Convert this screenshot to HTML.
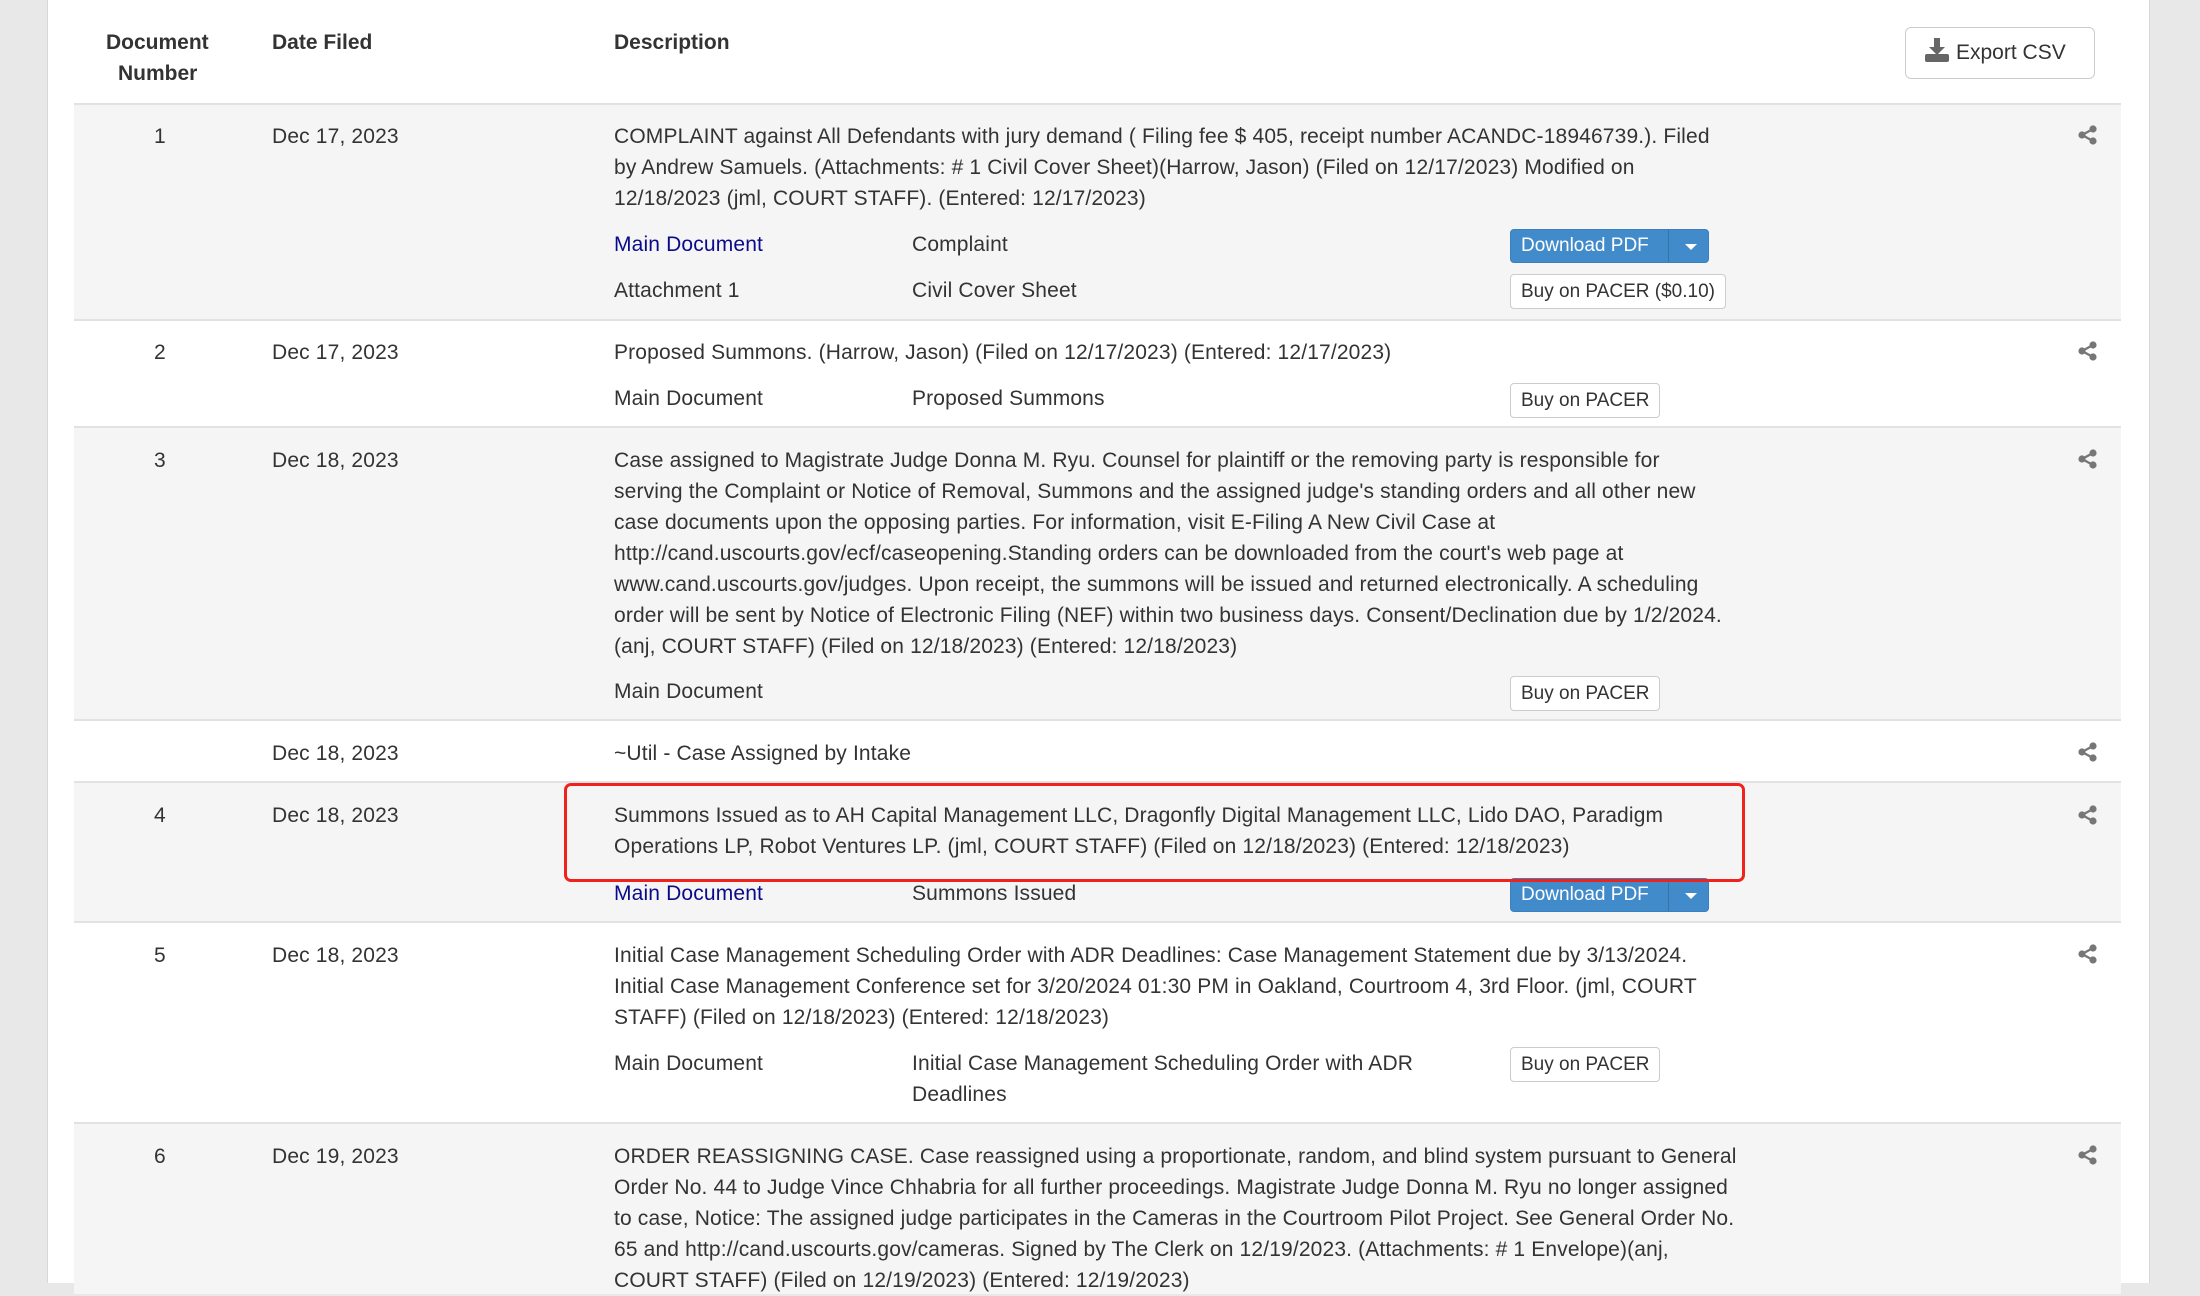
<!DOCTYPE html>
<html><head><meta charset="utf-8"><style>
*{margin:0;padding:0;box-sizing:border-box}
body{width:2200px;height:1283px;overflow:hidden;background:#e8e8e8;font-family:"Liberation Sans",Arial,sans-serif;color:#333;font-size:21px;position:relative;letter-spacing:0.15px}
.page{position:absolute;left:47px;top:0;width:2103px;height:1283px;background:#fff;border-left:1px solid #d8d8d8;border-right:1px solid #d8d8d8}
.row{position:absolute;left:74px;width:2047px;border-bottom:2px solid #e2e2e2}
.g{background:#f5f5f5}
.t{position:absolute;white-space:nowrap;line-height:31px}
.b{font-weight:bold;letter-spacing:0}
a{color:#0a0a8a;text-decoration:none}
.btn{position:absolute;border:1px solid #ccc;border-radius:4px;background:#fff;font-size:19px;line-height:33px;height:35px;padding:0 10px;white-space:nowrap;letter-spacing:0}
.dl{position:absolute;background:#428bca;border:1px solid #3a7fc0;border-radius:4px;color:#fff;font-size:19px;height:34px;width:199px;line-height:32px;padding-left:10px;letter-spacing:0}
.dl span{position:absolute;left:157px;top:0;width:1px;height:32px;background:#3572a8}
.dl i{position:absolute;left:174px;top:14px;border-left:6px solid transparent;border-right:6px solid transparent;border-top:6px solid #fff}
.sh{position:absolute;left:2078px}
</style></head><body>
<div class="page"></div>
<svg width="0" height="0" style="position:absolute"><defs><g id="share"><circle cx="15" cy="4" r="3.6" fill="#777"/><circle cx="4" cy="10" r="3.6" fill="#777"/><circle cx="15" cy="16" r="3.6" fill="#777"/><path d="M4 10L15 4M4 10L15 16" stroke="#777" stroke-width="2.4"/></g></defs></svg>

<div class="t b" style="left:106px;top:27px">Document</div>
<div class="t b" style="left:118px;top:58px">Number</div>
<div class="t b" style="left:272px;top:27px">Date Filed</div>
<div class="t b" style="left:614px;top:27px">Description</div>
<div class="btn" style="left:1905px;top:27px;height:52px;width:190px;line-height:50px;font-size:21px;border-radius:6px;padding-left:18px"><svg width="26" height="26" viewBox="0 0 26 26" style="vertical-align:-4px;margin-right:6px"><path d="M10 1h6v9h5l-8 8-8-8h5z" fill="#666"/><rect x="1" y="17" width="24" height="8" rx="2" fill="#666"/></svg>Export CSV</div>
<div style="position:absolute;left:74px;top:103px;width:2047px;height:2px;background:#e2e2e2"></div>

<div class="row g" style="top:105px;height:216px"></div>
<div class="t" style="left:154px;top:121px">1</div>
<div class="t" style="left:272px;top:121px">Dec 17, 2023</div>
<div class="t" style="left:614px;top:121px">COMPLAINT against All Defendants with jury demand ( Filing fee $ 405, receipt number ACANDC-18946739.). Filed<br>by Andrew Samuels. (Attachments: # 1 Civil Cover Sheet)(Harrow, Jason) (Filed on 12/17/2023) Modified on<br>12/18/2023 (jml, COURT STAFF). (Entered: 12/17/2023)</div>
<div class="t" style="left:614px;top:229px"><a>Main Document</a></div>
<div class="t" style="left:912px;top:229px">Complaint</div>
<div class="dl" style="left:1510px;top:229px">Download PDF<span></span><i></i></div>
<div class="t" style="left:614px;top:275px">Attachment 1</div>
<div class="t" style="left:912px;top:275px">Civil Cover Sheet</div>
<div class="btn" style="left:1510px;top:274px">Buy on PACER ($0.10)</div>
<svg class="sh" style="top:125px" width="20" height="20"><use href="#share"/></svg>

<div class="row" style="top:321px;height:107px"></div>
<div class="t" style="left:154px;top:337px">2</div>
<div class="t" style="left:272px;top:337px">Dec 17, 2023</div>
<div class="t" style="left:614px;top:337px">Proposed Summons. (Harrow, Jason) (Filed on 12/17/2023) (Entered: 12/17/2023)</div>
<div class="t" style="left:614px;top:383px">Main Document</div>
<div class="t" style="left:912px;top:383px">Proposed Summons</div>
<div class="btn" style="left:1510px;top:383px">Buy on PACER</div>
<svg class="sh" style="top:341px" width="20" height="20"><use href="#share"/></svg>

<div class="row g" style="top:428px;height:293px"></div>
<div class="t" style="left:154px;top:445px">3</div>
<div class="t" style="left:272px;top:445px">Dec 18, 2023</div>
<div class="t" style="left:614px;top:445px">Case assigned to Magistrate Judge Donna M. Ryu. Counsel for plaintiff or the removing party is responsible for<br>serving the Complaint or Notice of Removal, Summons and the assigned judge's standing orders and all other new<br>case documents upon the opposing parties. For information, visit E-Filing A New Civil Case at<br>http://cand.uscourts.gov/ecf/caseopening.Standing orders can be downloaded from the court's web page at<br>www.cand.uscourts.gov/judges. Upon receipt, the summons will be issued and returned electronically. A scheduling<br>order will be sent by Notice of Electronic Filing (NEF) within two business days. Consent/Declination due by 1/2/2024.<br>(anj, COURT STAFF) (Filed on 12/18/2023) (Entered: 12/18/2023)</div>
<div class="t" style="left:614px;top:676px">Main Document</div>
<div class="btn" style="left:1510px;top:676px">Buy on PACER</div>
<svg class="sh" style="top:449px" width="20" height="20"><use href="#share"/></svg>

<div class="row" style="top:721px;height:62px"></div>
<div class="t" style="left:272px;top:738px">Dec 18, 2023</div>
<div class="t" style="left:614px;top:738px">~Util - Case Assigned by Intake</div>
<svg class="sh" style="top:742px" width="20" height="20"><use href="#share"/></svg>

<div class="row g" style="top:783px;height:140px"></div>
<div class="t" style="left:154px;top:800px">4</div>
<div class="t" style="left:272px;top:800px">Dec 18, 2023</div>
<div class="t" style="left:614px;top:800px">Summons Issued as to AH Capital Management LLC, Dragonfly Digital Management LLC, Lido DAO, Paradigm<br>Operations LP, Robot Ventures LP. (jml, COURT STAFF) (Filed on 12/18/2023) (Entered: 12/18/2023)</div>
<div class="t" style="left:614px;top:878px"><a>Main Document</a></div>
<div class="t" style="left:912px;top:878px">Summons Issued</div>
<div class="dl" style="left:1510px;top:878px">Download PDF<span></span><i></i></div>
<div style="position:absolute;left:564px;top:783px;width:1181px;height:99px;border:3.5px solid #f0231c;border-radius:7px"></div>
<svg class="sh" style="top:805px" width="20" height="20"><use href="#share"/></svg>

<div class="row" style="top:923px;height:201px"></div>
<div class="t" style="left:154px;top:940px">5</div>
<div class="t" style="left:272px;top:940px">Dec 18, 2023</div>
<div class="t" style="left:614px;top:940px">Initial Case Management Scheduling Order with ADR Deadlines: Case Management Statement due by 3/13/2024.<br>Initial Case Management Conference set for 3/20/2024 01:30 PM in Oakland, Courtroom 4, 3rd Floor. (jml, COURT<br>STAFF) (Filed on 12/18/2023) (Entered: 12/18/2023)</div>
<div class="t" style="left:614px;top:1048px">Main Document</div>
<div class="t" style="left:912px;top:1048px">Initial Case Management Scheduling Order with ADR<br>Deadlines</div>
<div class="btn" style="left:1510px;top:1047px">Buy on PACER</div>
<svg class="sh" style="top:944px" width="20" height="20"><use href="#share"/></svg>

<div class="row g" style="top:1124px;height:170px;border-bottom:none"></div>
<div class="t" style="left:154px;top:1141px">6</div>
<div class="t" style="left:272px;top:1141px">Dec 19, 2023</div>
<div class="t" style="left:614px;top:1141px">ORDER REASSIGNING CASE. Case reassigned using a proportionate, random, and blind system pursuant to General<br>Order No. 44 to Judge Vince Chhabria for all further proceedings. Magistrate Judge Donna M. Ryu no longer assigned<br>to case, Notice: The assigned judge participates in the Cameras in the Courtroom Pilot Project. See General Order No.<br>65 and http://cand.uscourts.gov/cameras. Signed by The Clerk on 12/19/2023. (Attachments: # 1 Envelope)(anj,<br>COURT STAFF) (Filed on 12/19/2023) (Entered: 12/19/2023)</div>
<svg class="sh" style="top:1145px" width="20" height="20"><use href="#share"/></svg>
</body></html>
